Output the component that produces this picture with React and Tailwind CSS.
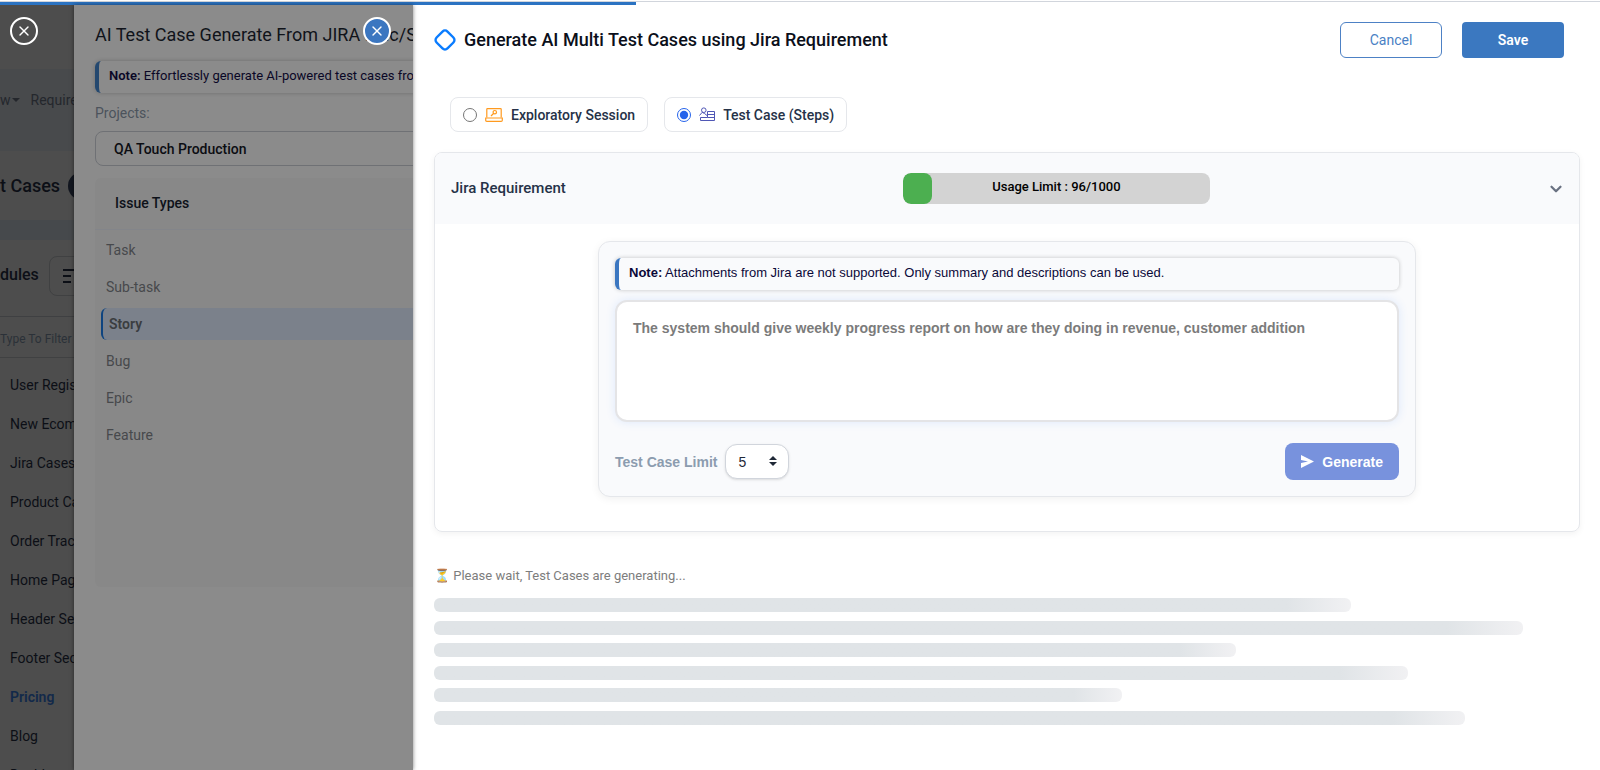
import React, { useState } from "react";
import { ChevronDown, X } from "lucide-react";

const modules = [
  "User Registration",
  "New Ecommerce",
  "Jira Cases",
  "Product Catalog",
  "Order Tracking",
  "Home Page",
  "Header Section",
  "Footer Section",
  "Pricing",
  "Blog",
  "Dashboard",
];

const issueTypes = ["Task", "Sub-task", "Story", "Bug", "Epic", "Feature"];

const skeletonWidths = [80, 95, 70, 85, 60, 90];

function DiamondLogo() {
  return (
    <svg width="22" height="22" viewBox="0 0 22 22" fill="none" className="shrink-0">
      <rect x="3.300" y="3.300" width="15.400" height="15.400" rx="3.500" transform="rotate(45 11 11)" stroke="#0a7cff" strokeWidth="2.400" />
    </svg>
  );
}

function LaptopIcon() {
  return (
    <svg width="18" height="14" viewBox="0 0 18 14" fill="none" stroke="#ff9a1f" strokeWidth="1.200" className="shrink-0">
      <path d="M1.800 9.500V1.300Q1.800 .6 2.500 .6H15.500Q16.200 .6 16.200 1.300V9.500" />
      <path d="M.7 10H17.300V12.200Q17.300 13.300 16.200 13.300H1.800Q.7 13.300 .7 12.200Z" />
      <circle cx="9.800" cy="4.200" r="1.700" />
      <path d="M8.500 5.500L6 8" />
    </svg>
  );
}

function StepsIcon() {
  return (
    <svg width="16" height="15" viewBox="0 0 16 15" fill="none" stroke="#5057b5" className="shrink-0">
      <circle cx="4.800" cy="3.200" r="2.300" />
      <path d="M.5 8.500L3.200 5.300L5.500 6.500L8 8.500" />
      <path d="M8.500 4.500H15.500V13.500H1.500V10.500H8.500Z" />
      <path d="M8.500 7.500H15.500M8.500 10.500H15.500" />
    </svg>
  );
}

function CloseButton({ className, label }) {
  return (
    <button
      aria-label={label}
      className={`flex size-7 items-center justify-center rounded-full border-2 border-white text-white ${className}`}
    >
      <X size={16} strokeWidth={2} />
    </button>
  );
}

function NoteBox({ children, className }) {
  return (
    <div className={`rounded-md border-l-4 pb-[2px] pl-[10px] text-[13px] leading-[30px] shadow-[0_0_4px_rgba(0,0,0,0.22)] ${className}`}>
      {children}
    </div>
  );
}

// Page behind both drawers, only its left edge shows
function ModulesPage() {
  return (
    <aside className="flex w-[74px] shrink-0 flex-col overflow-hidden whitespace-nowrap bg-[#4d4d4d] text-sm text-[#0c0f16]">
      <div className="h-16 shrink-0 pl-[10px] pt-3">
        <CloseButton label="Close page" className="bg-transparent" />
      </div>
      <div className="flex h-[82px] shrink-0 items-start gap-px bg-[#484a4c] pt-[21px] text-[#24272c]">
        <span>w</span>
        <span className="mt-2 size-0 border-x-4 border-t-4 border-x-transparent border-t-[#24272c]" />
        <span className="pl-[10px]">Requirements</span>
      </div>
      <div className="flex h-[69px] shrink-0 items-center gap-2 text-lg font-medium">
        <span>t Cases</span>
        <span className="flex size-7 shrink-0 items-center justify-center rounded-full bg-[#12161f] text-sm text-[#77797c]">7</span>
      </div>
      <div className="h-5 shrink-0 bg-[#46494c]" />
      <div className="flex h-[77px] shrink-0 items-start gap-[10px] border-b border-[#3f4042] pt-4 text-base font-medium leading-[38px]">
        <span>dules</span>
        <button aria-label="Collapse modules" className="flex h-10 w-16 shrink-0 items-center rounded-lg border border-[#404142] pl-3">
          <svg width="20" height="16" viewBox="0 0 20 16" stroke="#0c0f16" strokeWidth="2">
            <path d="M1 2H12M1 8H9M1 14H9M13 11L17 8" />
          </svg>
        </button>
      </div>
      <input
        aria-label="Filter modules"
        placeholder="Type To Filter"
        className="h-[41px] w-40 shrink-0 border-b border-[#404142] pt-1 text-xs placeholder:text-[#2b3138]"
      />
      <nav className="flex flex-col pl-[10px] pt-2">
        {modules.map((m) => (
          <a
            key={m}
            href="#"
            className={m === "Pricing" ? "leading-[39px] font-semibold text-[#12294a]" : "leading-[39px]"}
          >
            {m}
          </a>
        ))}
      </nav>
    </aside>
  );
}

function JiraDrawer() {
  return (
    <section className="relative w-[339px] shrink-0 overflow-hidden whitespace-nowrap bg-[#8b8b8b] pl-[21px] text-sm shadow-[0_0_4px_rgba(0,0,0,0.5)]">
      <h2 className="pt-4 text-lg leading-7 text-[#10131a]">AI Test Case Generate From JIRA Epic/Story</h2>
      <NoteBox className="mt-3 w-[600px] border-[#24486f] text-[#0a0726]">
        <b className="font-semibold">Note:</b> Effortlessly generate AI-powered test cases from Jira
      </NoteBox>
      <label htmlFor="project" className="block pt-2 leading-6 text-[#4c535c]">Projects:</label>
      <select
        id="project"
        className="mt-[6px] block h-[35px] w-[600px] appearance-none rounded-lg border border-[#6f7175] px-[18px] font-medium text-[#0b0d12]"
      >
        <option>QA Touch Production</option>
      </select>
      <div className="mt-3 h-[409px] w-[600px] rounded-md bg-[#888888]">
        <h3 className="h-[52px] border-b border-[#83858a] pl-5 font-medium leading-[50px] text-[#0d1119]">Issue Types</h3>
        <ul className="flex flex-col gap-[5px] pl-[6px] pt-1 leading-8 text-[#47494c]">
          {issueTypes.map((t) => (
            <li
              key={t}
              className={
                t === "Story"
                  ? "rounded-md border-l-2 border-[#0e4480] bg-[#7b818b] pl-[6px] font-semibold text-[#3a3d40]"
                  : "pl-[5px]"
              }
            >
              {t}
            </li>
          ))}
        </ul>
      </div>
      <CloseButton label="Close Jira drawer" className="absolute right-[22px] top-3 bg-[#3b76c0]" />
    </section>
  );
}

function TypeOption({ icon, label, checked, onChange }) {
  return (
    <label className="flex h-[35px] items-center gap-2 rounded-lg border border-gray-200 px-3 text-sm font-medium text-[#263248]">
      <input type="radio" name="caseType" checked={checked} onChange={onChange} className="size-[14px] accent-[#2563eb]" />
      {icon}
      {label}
    </label>
  );
}

function UsageBar({ used, limit }) {
  return (
    <div className="relative h-[31px] w-[307px] overflow-hidden rounded-lg bg-[#d3d3d3]">
      <div className="h-full rounded-lg bg-[#4caf50]" style={{ width: `${(used / limit) * 100}%` }} />
      <span className="absolute inset-0 text-center text-[13px] font-medium leading-7 text-black">
        Usage Limit : {used}/{limit}
      </span>
    </div>
  );
}

function GenerateForm() {
  const [prompt, setPrompt] = useState("");
  return (
    <form
      onSubmit={(e) => e.preventDefault()}
      className="mx-auto w-full max-w-[818px] rounded-xl border border-gray-200 bg-[#f9fafc] p-4 font-['Liberation_Sans',sans-serif] shadow-[0_2px_8px_rgba(0,0,0,0.06)]"
    >
      <NoteBox className="border-[#3b76c0] text-[#0a0838]">
        <b>Note:</b> Attachments from Jira are not supported. Only summary and descriptions can be used.
      </NoteBox>
      <textarea
        aria-label="Requirement"
        value={prompt}
        onChange={(e) => setPrompt(e.target.value)}
        placeholder="The system should give weekly progress report on how are they doing in revenue, customer addition"
        className="mt-[10px] block h-[122px] w-full resize-none rounded-xl border-2 border-[#e4e4e6] bg-white px-4 py-[14px] text-sm font-bold leading-6 shadow-[0_0_10px_rgba(59,130,246,0.14)] placeholder:text-[#7b7b7b]"
      />
      <div className="mt-[21px] flex items-center justify-between">
        <div className="flex items-center gap-2">
          <label htmlFor="limit" className="text-sm font-bold text-[#8c9caf]">Test Case Limit</label>
          <div className="relative">
            <select
              id="limit"
              defaultValue="5"
              className="block h-[35px] w-16 appearance-none rounded-xl border border-gray-300 bg-white pl-3 text-sm text-[#1f2937] shadow-sm"
            >
              <option>5</option>
              <option>10</option>
            </select>
            <svg width="8" height="10" viewBox="0 0 8 10" fill="#1f2937" className="pointer-events-none absolute right-3 top-3">
              <path d="M4 0L8 4H0ZM0 6H8L4 10Z" />
            </svg>
          </div>
        </div>
        <button className="flex h-[37px] items-center gap-2 rounded-lg bg-[#7892dd] px-4 text-sm font-bold text-white">
          <svg width="13" height="13" viewBox="0 0 13 13" fill="currentColor">
            <path d="M0 0L13 6.500L0 13V8L7 6.500L0 5Z" />
          </svg>
          Generate
        </button>
      </div>
    </form>
  );
}

function GenerateDrawer() {
  const [type, setType] = useState("steps");
  return (
    <main className="min-w-0 flex-1 overflow-hidden bg-white pl-[21px] pr-5">
      <header className="flex items-center justify-between pr-4 pt-[17px]">
        <div className="flex items-center gap-2">
          <DiamondLogo />
          <h1 className="pb-px text-lg font-medium text-[#0b0f1a]">Generate AI Multi Test Cases using Jira Requirement</h1>
        </div>
        <div className="flex gap-5 text-sm">
          <button className="h-9 w-[102px] rounded-md border border-[#4d81c5] text-[#4a7fc4]">Cancel</button>
          <button className="h-9 w-[102px] rounded-sm bg-[#3b78c0] font-semibold text-white">Save</button>
        </div>
      </header>

      <div className="mt-[39px] flex gap-4 pl-4">
        <TypeOption
          icon={<LaptopIcon />}
          label="Exploratory Session"
          checked={type === "session"}
          onChange={() => setType("session")}
        />
        <TypeOption
          icon={<StepsIcon />}
          label="Test Case (Steps)"
          checked={type === "steps"}
          onChange={() => setType("steps")}
        />
      </div>

      <section className="mt-5 overflow-hidden rounded-lg border border-gray-200 pb-[34px] shadow-[0_2px_6px_rgba(0,0,0,0.05)]">
        <div className="mb-[17px] flex h-[71px] items-center justify-between bg-[#f9fafc] pl-4 pr-[14px]">
          <h2 className="text-[15px] font-medium text-[#263248]">Jira Requirement</h2>
          <UsageBar used={96} limit={1000} />
          <button aria-label="Collapse" className="text-gray-500">
            <ChevronDown size={18} strokeWidth={3} />
          </button>
        </div>
        <GenerateForm />
      </section>

      {/* Loading state */}
      <p className="mt-8 text-[13px] leading-6 text-[#7d7d7d]">⏳ Please wait, Test Cases are generating...</p>
      <div className="mt-[10px] flex h-[127px] flex-col justify-between">
        {skeletonWidths.map((w) => (
          <div
            key={w}
            className="h-[14px] rounded-md bg-linear-to-r from-[#e0e4e7] from-93% to-[#f1f1f3]"
            style={{ width: `${w}%` }}
          />
        ))}
      </div>
    </main>
  );
}

export default function App() {
  return (
    <div className="flex h-screen flex-col overflow-hidden bg-white font-[Roboto,sans-serif]">
      <div className="h-[5px] shrink-0 border-t border-white bg-white">
        <div className="h-1 border-t border-gray-300">
          <div className="h-[3px] w-[636px] bg-[#2b73c2]" />
        </div>
      </div>
      <div className="flex min-h-0 flex-1">
        <ModulesPage />
        <JiraDrawer />
        <GenerateDrawer />
      </div>
    </div>
  );
}
